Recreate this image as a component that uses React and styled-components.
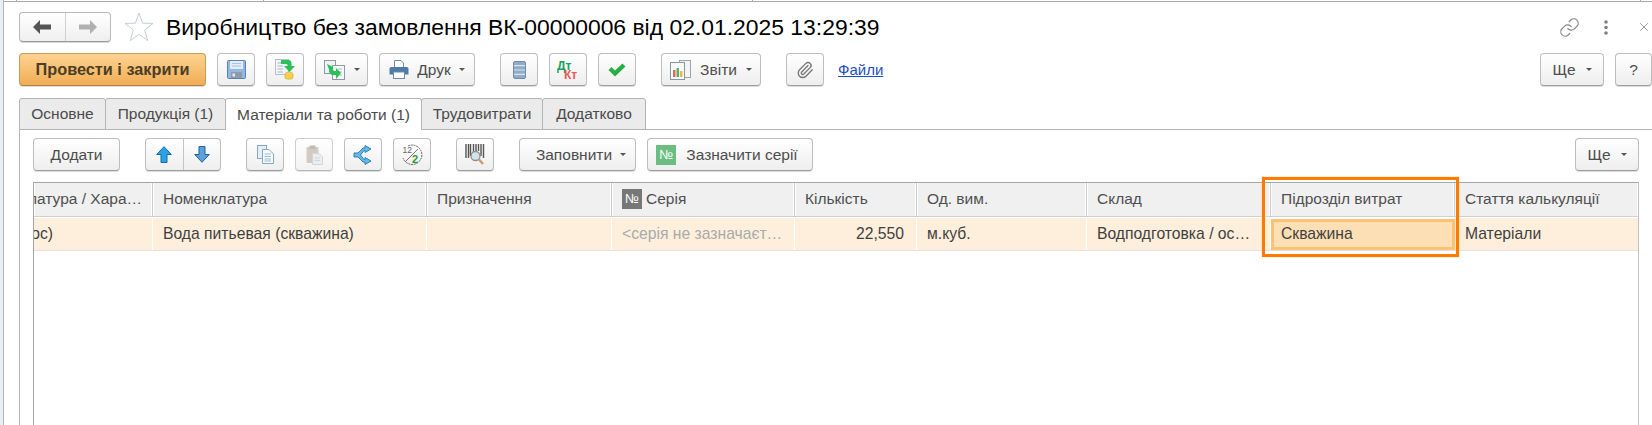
import React from 'react';
import styled, { createGlobalStyle } from 'styled-components';
import { Link, Paperclip, X } from 'lucide-react';

const GlobalStyle = createGlobalStyle`
  html, body {
    margin: 0;
    padding: 0;
    background: #fff;
  }
  * {
    box-sizing: border-box;
  }
`;

const Page = styled.div`
  display: flex;
  width: 100%;
  height: 100vh;
  overflow: hidden;
  font-family: "Liberation Sans", Arial, sans-serif;
  font-size: 15.5px;
  color: #4a4a4a;
`;

const Gutter = styled.div`
  width: 4px;
  flex: none;
  background: #e8f0f3;
  border-right: 1px solid #b4b4b4;
`;

const Window = styled.div`
  flex: 1;
  min-width: 0;
  display: flex;
  flex-direction: column;
  background: #fff;
`;

const Ruler = styled.div`
  display: grid;
  grid-template-columns: 13px 247px 489px 888px 1fr;
  height: 2px;
  border-bottom: 1px solid #a9a9a9;

  span {
    border-right: 1px solid #a9a9a9;
  }
  span:last-child {
    border-right: none;
  }
`;

const Form = styled.div`
  flex: 1;
  min-height: 0;
  display: flex;
  flex-direction: column;
  padding: 10px 0 0 15px;
`;

const TitleRow = styled.div`
  display: flex;
  align-items: center;
  height: 30px;
`;

const NavGroup = styled.div`
  display: flex;
  width: 92px;
  height: 30px;
  border: 1px solid #b9b9b9;
  border-bottom-color: #9c9c9c;
  border-radius: 4px;
  background: linear-gradient(#fff, #efefef);
  box-shadow: 0 1px 0 #d8d8d8;
`;

const NavButton = styled.div`
  flex: 1;
  display: flex;
  align-items: center;
  justify-content: center;

  & + & {
    border-left: 1px solid #d0d0d0;
  }
`;

const Title = styled.h1`
  margin: 0 0 0 12px;
  font-size: 22.9px;
  font-weight: 400;
  color: #000;
  white-space: nowrap;
`;

const WindowTools = styled.div`
  margin-left: auto;
  display: flex;
  align-items: center;
  color: #8a8a8a;
`;

const WindowTool = styled.div`
  display: flex;
  align-items: center;
  justify-content: center;
  width: ${(p) => p.$w}px;
  margin-left: ${(p) => p.$ml || 0}px;
`;

const Toolbar = styled.div`
  display: flex;
  align-items: flex-start;
  gap: 25px;
  margin-top: ${(p) => p.$mt}px;
`;

const ToolGroup = styled.div`
  display: flex;
  gap: 11px;
  align-items: center;
`;

const RightGroup = styled(ToolGroup)`
  margin-left: auto;
`;

const Button = styled.div`
  flex: none;
  display: flex;
  align-items: center;
  justify-content: center;
  gap: ${(p) => p.$gap || 0}px;
  width: ${(p) => p.$w}px;
  height: 33px;
  padding: 0 ${(p) => p.$pr || 0}px 0 ${(p) => p.$pl || 0}px;
  border: 1px solid #bdbdbd;
  border-bottom-color: #9e9e9e;
  border-radius: 4px;
  background: linear-gradient(#fff, #eeeeee);
  box-shadow: 0 1px 0 #dcdcdc;
  font-size: 15.5px;
  color: #4d4d4d;
  white-space: nowrap;
  opacity: ${(p) => (p.$disabled ? 0.72 : 1)};
`;

const PrimaryButton = styled(Button)`
  border-color: #c99c55;
  border-bottom-color: #b08440;
  background: linear-gradient(#fdd391, #f0ad55);
  font-size: 16.3px;
  font-weight: 700;
  color: #4c3d26;
`;

const SplitButton = styled(Button)`
  padding: 0;
  align-items: stretch;
`;

const SplitPart = styled.div`
  flex: 1;
  display: flex;
  align-items: center;
  justify-content: center;

  & + & {
    border-left: 1px solid #c4c4c4;
  }
`;

const Caret = styled.span`
  width: 0;
  height: 0;
  border-left: 3px solid transparent;
  border-right: 3px solid transparent;
  border-top: 3px solid #555;
`;

const FileLink = styled.a`
  align-self: center;
  margin-left: -11px;
  font-size: 15px;
  color: #1d4fc0;
  text-decoration: underline;
`;

const Tabs = styled.div`
  display: flex;
  height: 32px;
  margin-top: 12px;
  margin-bottom: -1px;
  position: relative;
  z-index: 1;
`;

const Tab = styled.div`
  display: flex;
  align-items: center;
  justify-content: center;
  width: ${(p) => p.$w}px;
  margin-left: -1px;
  border: 1px solid #b4b4b4;
  border-bottom: ${(p) => (p.$active ? 'none' : '1px solid #b4b4b4')};
  border-radius: 3px 3px 0 0;
  background: ${(p) => (p.$active ? '#fff' : '#ebebeb')};
  font-size: 15.5px;
  color: #4a4a4a;
  white-space: nowrap;

  &:first-child {
    margin-left: 0;
  }
`;

const Panel = styled.div`
  flex: 1;
  min-height: 0;
  display: flex;
  flex-direction: column;
  border-top: 1px solid #b4b4b4;
  border-left: 1px solid #b4b4b4;
  padding: 8px 13px 0 13px;
`;

const Table = styled.div`
  position: relative;
  flex: 1;
  min-height: 0;
  margin-top: 11px;
  border: 1px solid #a6a6a6;
  border-bottom: none;
  border-right-color: #c0c0c0;
`;

const GridRow = styled.div`
  display: grid;
  grid-template-columns: 119px 274px 185px 183px 122px 170px 184px 184px 1fr;
  height: ${(p) => p.$h}px;
`;

const HeadCell = styled.div`
  display: flex;
  align-items: center;
  gap: 4px;
  padding: 0 0 2px 10px;
  background: #f0f0f0;
  border-right: 1px solid #cccccc;
  box-shadow: inset -1px 0 0 #fff, inset 1px 0 0 #fff;
  border-bottom: 1px solid #d0d0d0;
  font-size: 15.5px;
  color: #4f4f4f;
  white-space: nowrap;
  overflow: hidden;

  &:last-child {
    border-right: none;
  }
`;

const ClippedHead = styled(HeadCell)`
  justify-content: flex-end;
  padding: 0 10px 2px 0;
`;

const Body = styled.div`
  margin-top: 1px;
  border-bottom: 1px solid #e2e2e2;
`;

const Cell = styled.div`
  display: flex;
  align-items: center;
  justify-content: ${(p) => (p.$right ? 'flex-end' : 'flex-start')};
  padding: ${(p) => (p.$right ? '0 12px 0 0' : '0 0 0 10px')};
  background: #feefdc;
  border-right: 1px solid #fff;
  font-size: 15.7px;
  color: ${(p) => (p.$muted ? '#aaaaaa' : '#3f3f3f')};
  white-space: nowrap;
  overflow: hidden;

  &:last-child {
    border-right: none;
  }
`;

const ClippedCell = styled(Cell)`
  justify-content: flex-end;
  padding: 0 99px 0 0;
`;

const SelectedCell = styled(Cell)`
  margin: 1px 0 0 0;
  padding: 0 0 1px 7px;
  background: #fddfb5;
  border: 3px solid #fcc26f;
`;

const NumberBadge = styled.span`
  display: inline-flex;
  align-items: center;
  justify-content: center;
  width: 20px;
  height: 20px;
  flex: none;
  background: ${(p) => p.$bg};
  color: #fff;
  font-size: 13px;
`;

const Highlight = styled.div`
  position: absolute;
  top: -6px;
  left: 1228px;
  width: 197px;
  height: 80px;
  border: 3px solid #ff7b00;
  box-shadow: 0 0 1px #ffb066;
  pointer-events: none;
`;

const ArrowLeft = ({ fill }) => (
  <svg width="18" height="14" viewBox="0 0 18 14">
    <path d="M0 7 L7 0 V4.5 H18 V9.5 H7 V14 Z" fill={fill} />
  </svg>
);

const ArrowRight = ({ fill }) => (
  <svg width="18" height="14" viewBox="0 0 18 14">
    <path d="M18 7 L11 0 V4.5 H0 V9.5 H11 V14 Z" fill={fill} />
  </svg>
);

const StarIcon = () => (
  <svg width="30" height="30" viewBox="0 0 30 30" style={{ marginLeft: 13, flex: 'none' }}>
    <path
      d="M15 1 L18.6 11.2 L29 11.4 L20.7 18 L23.7 28.6 L15 22.4 L6.3 28.6 L9.3 18 L1 11.4 L11.4 11.2 Z"
      fill="#fff"
      stroke="#c6cdd4"
    />
  </svg>
);

const SaveIcon = () => (
  <svg width="19" height="19" viewBox="0 0 19 19">
    <rect x="0.5" y="0.5" width="18" height="18" rx="1" fill="#92b7e3" stroke="#5583b8" />
    <rect x="3" y="1" width="13" height="8" fill="#e3edf8" />
    <path d="M5 3.5 H14 M5 6 H14" stroke="#a9c3e0" />
    <rect x="4" y="12" width="11" height="6" fill="#8e9aa8" />
    <rect x="5.5" y="13.5" width="2.5" height="3" fill="#e6e9ec" />
  </svg>
);

const PostIcon = () => (
  <svg width="20" height="21" viewBox="0 0 20 21">
    <rect x="0.5" y="0.5" width="13" height="15" fill="#f3f6f9" stroke="#b4bfcb" />
    <path d="M2.5 4 H9 M2.5 7 H8 M2.5 10 H8 M2.5 13 H8" stroke="#a5b7c9" />
    <path d="M6 1 H13 C16 1 16.5 3 16.5 5 V7 H20 L14.5 13 L9 7 H12.5 V6 C12.5 5 12 5 11 5 H6 Z" fill="#2cc05a" />
    <ellipse cx="14" cy="15" rx="4" ry="2" fill="#f6d75e" stroke="#d1a92e" strokeWidth="0.6" />
    <path d="M10 15 V19 C10 20.5 18 20.5 18 19 V15" fill="#f3cf4c" stroke="#d1a92e" strokeWidth="0.6" />
  </svg>
);

const RelatedIcon = () => (
  <svg width="21" height="20" viewBox="0 0 21 20">
    <rect x="0.5" y="0.5" width="11" height="13" fill="#eef2f6" stroke="#8d9aa8" />
    <rect x="8.5" y="5.5" width="12" height="14" fill="#f6f8fa" stroke="#8d9aa8" />
    <path d="M14 9 H18 M14 12 H18 M14 15 H18" stroke="#b3bfcb" />
    <path d="M3 4 L9 7 V9.5 C9 11 10 11 11 11 H12 V8 L17 13 L12 19 V15 H9 C7 15 5 13 5 11 V9.5 Z" fill="#2cc05a" />
  </svg>
);

const PrinterIcon = () => (
  <svg width="20" height="19" viewBox="0 0 20 19">
    <path d="M5.5 8 V0.5 H12 L14.5 3 V8 Z" fill="#fff" stroke="#6e8ca8" />
    <path d="M0.5 9 C0.5 7.5 1.5 7 3 7 H17 C18.5 7 19.5 7.5 19.5 9 V14.5 H0.5 Z" fill="#4f7ca6" />
    <rect x="4.5" y="12" width="11" height="6.5" fill="#fff" stroke="#6e8ca8" />
  </svg>
);

const StackIcon = () => (
  <svg width="13" height="18" viewBox="0 0 13 18">
    <rect x="0.5" y="0.5" width="12" height="17" rx="1.5" fill="#8facc8" stroke="#6d8cab" />
    <path d="M1 4.7 H12 M1 9 H12 M1 13.3 H12" stroke="#d9e4ee" strokeWidth="1.2" />
  </svg>
);

const EntriesIcon = () => (
  <svg width="22" height="20" viewBox="0 0 22 20" fontFamily="'Liberation Sans', sans-serif" fontWeight="700">
    <text x="0" y="9.5" fontSize="12" fill="#17a257">Дт</text>
    <text x="7" y="19" fontSize="12" fill="#ea5a5a">Кт</text>
  </svg>
);

const CheckIcon = () => (
  <svg width="18" height="14" viewBox="0 0 18 14">
    <path d="M0.5 7 L3.5 4 L7 7.5 L14.5 0.5 L17.5 3.5 L7 13.5 Z" fill="#27ae45" />
  </svg>
);

const ReportsIcon = () => (
  <svg width="21" height="20" viewBox="0 0 21 20">
    <rect x="9.5" y="0.5" width="11" height="17" fill="#f4f4f4" stroke="#9aa4ad" />
    <rect x="0.5" y="2.5" width="14" height="17" fill="#fafafa" stroke="#8b959f" />
    <rect x="3" y="10" width="2.5" height="7" fill="#e36a5c" />
    <rect x="6.5" y="8" width="2.5" height="9" fill="#58b368" />
    <rect x="10" y="11" width="2.5" height="6" fill="#e9b949" />
  </svg>
);

const UpIcon = () => (
  <svg width="16" height="17" viewBox="0 0 16 17">
    <path d="M8 0.7 L15.3 8.5 H11 V16.5 H5 V8.5 H0.7 Z" fill="#2ba2e4" stroke="#0f6ca8" />
  </svg>
);

const DownIcon = () => (
  <svg width="16" height="17" viewBox="0 0 16 17">
    <path d="M8 16.3 L15.3 8.5 H11 V0.5 H5 V8.5 H0.7 Z" fill="#5aa1da" stroke="#27609a" />
  </svg>
);

const CopyIcon = () => (
  <svg width="17" height="19" viewBox="0 0 17 19">
    <rect x="0.5" y="0.5" width="9" height="13" fill="#e4eef5" stroke="#86a9c2" />
    <path d="M5.5 4.5 H12 L16.5 9 V18.5 H5.5 Z" fill="#f6fafc" stroke="#86a9c2" />
    <path d="M7.5 9 H14 M7.5 11.5 H14 M7.5 14 H14 M7.5 16 H14" stroke="#9dbbd0" />
  </svg>
);

const PasteIcon = () => (
  <svg width="17" height="20" viewBox="0 0 17 20">
    <rect x="0.5" y="2" width="12" height="16" rx="1" fill="#c3b8ac" />
    <rect x="3.5" y="0.5" width="6" height="3.5" fill="#a8a29a" />
    <path d="M6.5 8.5 H13 L16.5 12 V19.5 H6.5 Z" fill="#e3e8ec" stroke="#c0c9d0" />
    <path d="M8.5 13 H14 M8.5 15.5 H14" stroke="#c0c9d0" />
  </svg>
);

const BranchIcon = () => (
  <svg width="20" height="20" viewBox="0 0 20 20">
    <path
      d="M1 8 H5 L10 3 H12 V0.5 L18 4 L12 7.5 V5.5 H11 L7.5 10 L11 14.5 H12 V12.5 L18 16 L12 19.5 V17 H10 L5 12 H1 Z"
      fill="#6ab7e6"
      stroke="#2c7fb8"
    />
  </svg>
);

const RecalcIcon = () => (
  <svg width="22" height="22" viewBox="0 0 22 22" fontFamily="'Liberation Sans', sans-serif">
    <path d="M7 2 A9.7 9.7 0 1 1 2 14" fill="none" stroke="#666" strokeDasharray="2 0.8" />
    <path d="M4 18 L17 5" stroke="#777" />
    <text x="1.5" y="9" fontSize="8.5" fill="#666">12</text>
    <text x="11" y="19" fontSize="11" fontWeight="700" fill="#2f9e2f">2</text>
  </svg>
);

const BarcodeIcon = () => (
  <svg width="20" height="21" viewBox="0 0 20 21">
    <path d="M1 0 V14 M3.5 0 V14 M5.5 0 V12 M8.5 0 V8 M11 0 V7 M13.5 0 V7 M16 0 V12 M18.5 0 V14" stroke="#555" strokeWidth="1.4" />
    <circle cx="10.5" cy="12" r="4.5" fill="#cfe4f2" stroke="#9a8d80" strokeWidth="1.3" />
    <path d="M14 15.5 L18 20" stroke="#c69b6d" strokeWidth="2.4" />
  </svg>
);

const DotsIcon = () => (
  <svg width="4" height="15" viewBox="0 0 4 15">
    <circle cx="2" cy="2" r="1.8" fill="#808080" />
    <circle cx="2" cy="7.5" r="1.8" fill="#808080" />
    <circle cx="2" cy="13" r="1.8" fill="#808080" />
  </svg>
);

export default function App() {
  return (
    <Page>
      <GlobalStyle />
      <Gutter />
      <Window>
        <Ruler>
          <span />
          <span />
          <span />
          <span />
          <span />
        </Ruler>
        <Form>
          <TitleRow>
            <NavGroup>
              <NavButton><ArrowLeft fill="#555" /></NavButton>
              <NavButton><ArrowRight fill="#b0b0b0" /></NavButton>
            </NavGroup>
            <StarIcon />
            <Title>Виробництво без замовлення ВК-00000006 від 02.01.2025 13:29:39</Title>
            <WindowTools>
              <WindowTool $w={22}><Link size={21} strokeWidth={1.4} /></WindowTool>
              <WindowTool $w={16} $ml={18}><DotsIcon /></WindowTool>
              <WindowTool $w={16} $ml={22}><X size={14} strokeWidth={1.5} /></WindowTool>
            </WindowTools>
          </TitleRow>

          <Toolbar $mt={11}>
            <ToolGroup>
              <PrimaryButton $w={187}>Провести і закрити</PrimaryButton>
              <Button $w={38}><SaveIcon /></Button>
              <Button $w={38}><PostIcon /></Button>
              <Button $w={53} $gap={9}><RelatedIcon /><Caret /></Button>
              <Button $w={96} $gap={8}><PrinterIcon />Друк<Caret /></Button>
            </ToolGroup>
            <ToolGroup>
              <Button $w={38}><StackIcon /></Button>
              <Button $w={38}><EntriesIcon /></Button>
              <Button $w={38}><CheckIcon /></Button>
            </ToolGroup>
            <Button $w={100} $gap={9}><ReportsIcon />Звіти<Caret /></Button>
            <ToolGroup>
              <Button $w={38}><Paperclip size={18} strokeWidth={1.8} color="#777" /></Button>
            </ToolGroup>
            <FileLink>Файли</FileLink>
            <RightGroup>
              <Button $w={64} $gap={10}>Ще<Caret /></Button>
              <Button $w={37}>?</Button>
            </RightGroup>
          </Toolbar>

          <Tabs>
            <Tab $w={87}>Основне</Tab>
            <Tab $w={121}>Продукція (1)</Tab>
            <Tab $w={197} $active>Матеріали та роботи (1)</Tab>
            <Tab $w={122}>Трудовитрати</Tab>
            <Tab $w={104}>Додатково</Tab>
          </Tabs>

          <Panel>
            <Toolbar $mt={0}>
              <Button $w={87}>Додати</Button>
              <SplitButton $w={76}>
                <SplitPart><UpIcon /></SplitPart>
                <SplitPart><DownIcon /></SplitPart>
              </SplitButton>
              <ToolGroup>
                <Button $w={38}><CopyIcon /></Button>
                <Button $w={38} $disabled><PasteIcon /></Button>
                <Button $w={38}><BranchIcon /></Button>
                <Button $w={38}><RecalcIcon /></Button>
              </ToolGroup>
              <Button $w={38}><BarcodeIcon /></Button>
              <ToolGroup>
                <Button $w={117} $gap={8} $pl={7}>Заповнити<Caret /></Button>
                <Button $w={166} $gap={10} $pr={6}>
                  <NumberBadge $bg="#6cbd81">№</NumberBadge>
                  Зазначити серії
                </Button>
              </ToolGroup>
              <RightGroup>
                <Button $w={64} $gap={10}>Ще<Caret /></Button>
              </RightGroup>
            </Toolbar>

            <Table>
              <GridRow $h={34}>
                <ClippedHead>Номенклатура / Хара…</ClippedHead>
                <HeadCell>Номенклатура</HeadCell>
                <HeadCell>Призначення</HeadCell>
                <HeadCell><NumberBadge $bg="#777">№</NumberBadge>Серія</HeadCell>
                <HeadCell>Кількість</HeadCell>
                <HeadCell>Од. вим.</HeadCell>
                <HeadCell>Склад</HeadCell>
                <HeadCell>Підрозділ витрат</HeadCell>
                <HeadCell>Стаття калькуляції</HeadCell>
              </GridRow>
              <Body>
                <GridRow $h={32}>
                  <ClippedCell>Вода (насос)</ClippedCell>
                  <Cell>Вода питьевая (скважина)</Cell>
                  <Cell />
                  <Cell $muted>&lt;серія не зазначаєт…</Cell>
                  <Cell $right>22,550</Cell>
                  <Cell>м.куб.</Cell>
                  <Cell>Водподготовка / ос…</Cell>
                  <SelectedCell>Скважина</SelectedCell>
                  <Cell>Матеріали</Cell>
                </GridRow>
              </Body>
              <Highlight />
            </Table>
          </Panel>
        </Form>
      </Window>
    </Page>
  );
}
